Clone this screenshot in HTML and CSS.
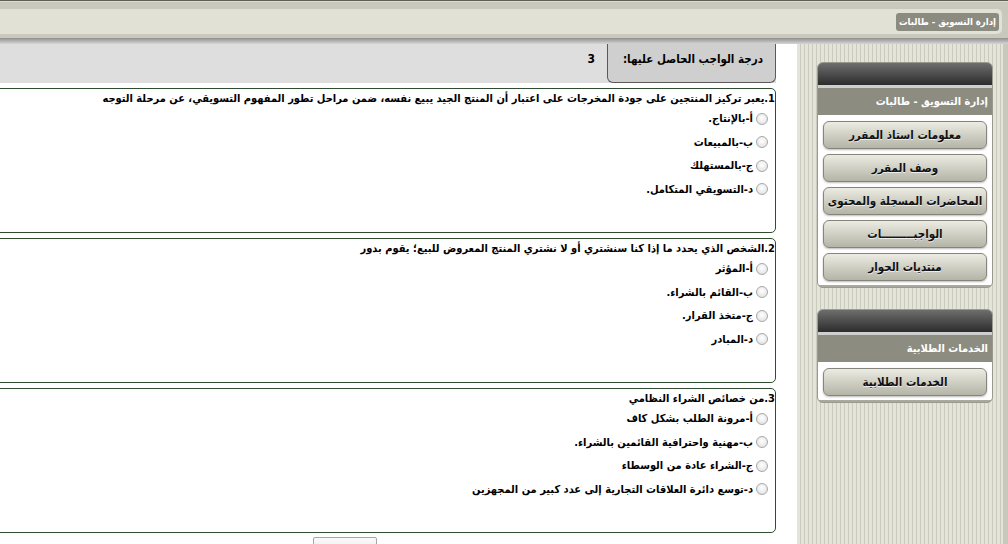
FILE: index.html
```html
<!DOCTYPE html>
<html lang="ar" dir="rtl">

<head>
  <meta charset="UTF-8">
  <title>إدارة التسويق - طالبات</title>
  <link rel="stylesheet" href="styles.css">
</head>

<body>
  <header class="topbar">
    <div class="titlebar">
      <span class="course-tag">إدارة التسويق - طالبات</span>
    </div>
  </header>
  <div class="shadow"></div>

  <div class="page">
    <aside class="sidebar">
      <div class="box">
        <div class="box-head"></div>
        <div class="box-title">إدارة التسويق - طالبات</div>
        <div class="box-body">
          <a class="side-btn">معلومات استاذ المقرر</a>
          <a class="side-btn">وصف المقرر</a>
          <a class="side-btn">المحاضرات المسجلة والمحتوى</a>
          <a class="side-btn">الواجبـــــــــات</a>
          <a class="side-btn">منتديات الحوار</a>
        </div>
      </div>

      <div class="box">
        <div class="box-head"></div>
        <div class="box-title">الخدمات الطلابية</div>
        <div class="box-body">
          <a class="side-btn">الخدمات الطلابية</a>
        </div>
      </div>
    </aside>

    <main class="content">
      <div class="grade-row">
        <div class="grade-label">درجة الواجب الحاصل عليها:</div>
        <div class="grade-value">3</div>
      </div>

      <div class="question">
        <div class="q-text">1.يعبر تركيز المنتجين على جودة المخرجات على اعتبار أن المنتج الجيد يبيع نفسه، ضمن مراحل تطور المفهوم التسويقي، عن مرحلة التوجه</div>
        <label class="option"><span class="radio"></span>أ-بالإنتاج.</label>
        <label class="option"><span class="radio"></span>ب-بالمبيعات</label>
        <label class="option"><span class="radio"></span>ج-بالمستهلك</label>
        <label class="option"><span class="radio"></span>د-التسويقي المتكامل.</label>
      </div>

      <div class="question">
        <div class="q-text">2.الشخص الذي يحدد ما إذا كنا سنشتري أو لا نشتري المنتج المعروض للبيع؛ يقوم بدور</div>
        <label class="option"><span class="radio"></span>أ-المؤثر</label>
        <label class="option"><span class="radio"></span>ب-القائم بالشراء.</label>
        <label class="option"><span class="radio"></span>ج-متخذ القرار.</label>
        <label class="option"><span class="radio"></span>د-المبادر</label>
      </div>

      <div class="question">
        <div class="q-text">3.من خصائص الشراء النظامي</div>
        <label class="option"><span class="radio"></span>أ-مرونة الطلب بشكل كاف</label>
        <label class="option"><span class="radio"></span>ب-مهنية واحترافية القائمين بالشراء.</label>
        <label class="option"><span class="radio"></span>ج-الشراء عادة من الوسطاء</label>
        <label class="option"><span class="radio"></span>د-توسع دائرة العلاقات التجارية إلى عدد كبير من المجهزين</label>
      </div>

      <div class="submit-row">
        <button class="submit-btn">إرسال الإجابات</button>
      </div>
    </main>
  </div>
</body>

</html>
```

FILE: styles.css
```css
body {
  margin: 0;
  font-family: "DejaVu Sans Condensed", "DejaVu Sans", sans-serif;
  font-size: 12px;
  background: #fff;
  color: #000;
  overflow: hidden;
}

/* شريط العنوان */
.topbar {
  background: #c8c9bc;
  border-top: 1px solid #5f5f52;
  box-shadow: inset 0 1px 0 #dcddd2;
  padding: 8px 6px 4px 0;
}

.titlebar {
  height: 25px;
  background: #e1e2d5;
  border-radius: 0 5px 5px 0;
  display: flex;
  align-items: center;
  padding-right: 3px;
}

.course-tag {
  background: #8b8b7f;
  color: #fff;
  font-weight: bold;
  font-size: 9.5px;
  padding: 2px 3px;
  border-radius: 3px;
  line-height: 14px;
}

.shadow {
  height: 6px;
  background: linear-gradient(#8f8f8f, #d6d6d6);
}

.page {
  display: flex;
  height: 500px;
}

/* القائمة الجانبية */
.sidebar {
  width: 176px;
  flex: none;
  padding: 18px 10px 0 20px;
  background: repeating-linear-gradient(90deg, #e4e5d9 0 3px, #cacbbe 3px 4px);
  border-right: 5px solid #c8c9bc;
  display: flex;
  flex-direction: column;
  gap: 21px;
}

.box {
  border: 1px solid #9a9a90;
  border-radius: 6px;
  background: #a9a99f;
  overflow: hidden;
  padding-bottom: 2px;
}

.box-head {
  height: 22px;
  background: linear-gradient(#6e6e6e, #2c2c2c);
  border-bottom: 3px solid #cfcfcf;
}

.box-title {
  background: #8c8c80;
  color: #fff;
  font-weight: bold;
  font-size: 11px;
  height: 27px;
  line-height: 27px;
  padding: 0 4px;
}

.box-body {
  background: #fff;
  padding: 6px 5px 4px;
  display: flex;
  flex-direction: column;
  gap: 5px;
}

.side-btn {
  display: block;
  height: 26px;
  line-height: 26px;
  text-align: center;
  font-weight: bold;
  font-size: 11.5px;
  white-space: nowrap;
  color: #111;
  text-shadow: 0 1px 0 #eee;
  background: linear-gradient(#ececE3, #d2d2c7 45%, #b4b4a7);
  border: 1px solid #85857b;
  border-radius: 6px;
  box-shadow: 0 1px 2px #0004;
  cursor: pointer;
}

/* المحتوى */
.content {
  flex: 1;
  overflow: hidden;
  padding-right: 21px;
}

.grade-row {
  display: flex;
  height: 39px;
  background: #dedede;
  width: 1000px;
}

.grade-label {
  width: 155px;
  flex: none;
  background: #cfcfcf;
  border: 1px solid #5a5a5a;
  border-top: none;
  border-radius: 0 0 6px 6px;
  font-weight: bold;
  font-size: 11.5px;
  padding: 8px 12px 0 0;
}

.grade-value {
  font-weight: bold;
  padding: 8px 12px 0 0;
}

.question {
  width: 1000px;
  height: 141px;
  margin-top: 5px;
  border: 1px solid #2f4d2f;
  border-radius: 5px;
  padding-top: 2px;
}

.q-text {
  font-weight: bold;
  font-size: 11px;
  line-height: 16px;
  white-space: nowrap;
}

.option {
  display: flex;
  align-items: center;
  gap: 3px;
  height: 23.5px;
  padding-right: 7px;
  font-weight: bold;
  font-size: 11px;
}

.radio {
  width: 10px;
  height: 10px;
  border: 1px solid #a8a8a8;
  border-radius: 50%;
  background: radial-gradient(circle at 50% 40%, #fff, #dcdcdc);
}

.submit-row {
  padding: 4px 399px 0 0;
}

.submit-btn {
  width: 64px;
  height: 22px;
  font-family: "DejaVu Sans Condensed", "DejaVu Sans", sans-serif;
  font-size: 11px;
  background: linear-gradient(#fafafa, #e3e3e3);
  border: 1px solid #a5a5a5;
  border-radius: 2px;
  padding: 0;
}
```
